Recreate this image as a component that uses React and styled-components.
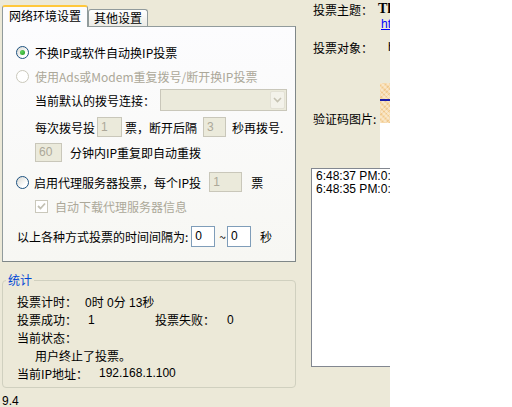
import React from "react";
import styled, { createGlobalStyle } from "styled-components";

const GlobalStyle = createGlobalStyle`
  html, body { margin: 0; padding: 0; background: #fff; }
  body {
    font-family: "Noto Sans CJK SC", "Liberation Sans", sans-serif;
    font-size: 12px;
    color: #000;
  }
`;

const Window = styled.div`
  display: flex;
  width: 390px;
  height: 407px;
  background: #ece9d8;
  overflow: hidden;
`;

const LeftCol = styled.div`
  width: 298px;
  flex-shrink: 0;
  box-sizing: border-box;
  padding: 5px 0 0 2px;
  overflow: hidden;
`;

const TabRow = styled.div`
  display: flex;
  align-items: flex-end;
  height: 21px;
`;

const Tab = styled.div`
  position: relative;
  z-index: 1;
  box-sizing: border-box;
  height: ${(p) => (p.$active ? 22 : 17)}px;
  padding: 0 ${(p) => (p.$active ? 6 : 5)}px;
  margin-bottom: ${(p) => (p.$active ? -1 : 0)}px;
  border: 1px solid #919b9c;
  border-bottom: none;
  border-top: ${(p) => (p.$active ? "2px solid #ffc83c" : "1px solid #919b9c")};
  border-radius: 3px 3px 0 0;
  background: ${(p) => (p.$active ? "#fcfcfe" : "linear-gradient(#fff, #ecebe6)")};
  line-height: ${(p) => (p.$active ? 18 : 15)}px;
  white-space: nowrap;
`;

const Panel = styled.div`
  box-sizing: border-box;
  width: 294px;
  height: 236px;
  padding-top: 13px;
  border: 1px solid #919b9c;
  border-right-color: #7f8788;
  border-bottom-color: #7f8788;
  background: linear-gradient(#fcfcfe, #f7f7f3);
`;

const Row = styled.div`
  display: flex;
  align-items: center;
  height: ${(p) => p.$h}px;
  margin-top: ${(p) => p.$mt || 0}px;
  padding-left: ${(p) => p.$indent || 0}px;
  color: ${(p) => (p.$disabled ? "#aca899" : "#000")};
  white-space: nowrap;
`;

const Label = styled.span`
  margin-left: ${(p) => p.$ml || 0}px;
  margin-right: ${(p) => p.$mr || 0}px;
`;

const Radio = styled.span`
  box-sizing: border-box;
  width: 13px;
  height: 13px;
  border-radius: 50%;
  border: 1px solid ${(p) => (p.$disabled ? "#cac8bb" : "#1c5180")};
  background: ${(p) => (p.$disabled ? "#fff" : "linear-gradient(135deg, #d8d8d2, #fff 70%)")};
  display: flex;
  align-items: center;
  justify-content: center;
  margin-right: ${(p) => p.$mr || 6}px;
  &::after {
    content: "";
    display: ${(p) => (p.$checked ? "block" : "none")};
    width: 5px;
    height: 5px;
    border-radius: 50%;
    background: radial-gradient(circle at 35% 35%, #5fd35f, #1f9a1f);
  }
`;

const Check = styled.span`
  box-sizing: border-box;
  width: 13px;
  height: 13px;
  border: 1px solid #cac8bb;
  background: #fff;
  display: flex;
  align-items: center;
  justify-content: center;
  margin-right: 7px;
`;

const Field = styled.span`
  box-sizing: border-box;
  display: inline-flex;
  align-items: center;
  width: ${(p) => p.$w}px;
  height: ${(p) => p.$h || 20}px;
  margin-left: ${(p) => p.$ml || 0}px;
  margin-right: ${(p) => p.$mr || 0}px;
  padding-left: 3px;
  border: 1px solid ${(p) => (p.$disabled ? "#c9c7ba" : "#7f9db9")};
  background: ${(p) => (p.$disabled ? "#ebeadb" : "#fff")};
  color: ${(p) => (p.$disabled ? "#aca899" : "#000")};
  font-family: "Liberation Sans", sans-serif;
  font-size: 12px;
`;

const Select = styled.span`
  box-sizing: border-box;
  display: flex;
  justify-content: flex-end;
  align-items: center;
  width: 127px;
  height: 22px;
  margin-left: 5px;
  padding-right: 1px;
  border: 1px solid #c9c7ba;
  background: #ebeadb;
`;

const SelectButton = styled.span`
  box-sizing: border-box;
  width: 15px;
  height: 18px;
  display: flex;
  align-items: center;
  justify-content: center;
  border: 1px solid #e3e1d5;
  border-radius: 2px;
  background: #f3f2ea;
`;

const Group = styled.fieldset`
  box-sizing: border-box;
  width: 294px;
  margin: 11px 0 0 0;
  padding: 0;
  border: 1px solid #d0d0bf;
  border-radius: 4px;
`;

const Legend = styled.legend`
  margin-left: 3px;
  padding: 0 2px;
  line-height: 14px;
  color: #0046d5;
`;

const StatsBody = styled.div`
  padding: 6px 0 5px 14px;
`;

const StatRow = styled.div`
  display: flex;
  align-items: center;
  height: 17.8px;
  padding-left: ${(p) => p.$indent || 0}px;
  white-space: nowrap;
`;

const StatCell = styled.span`
  width: ${(p) => (p.$w ? `${p.$w}px` : "auto")};
  flex-shrink: 0;
  font-family: ${(p) => (p.$num ? '"Liberation Sans", "Noto Sans CJK SC", sans-serif' : "inherit")};
`;

const Version = styled.div`
  margin-top: 7px;
  line-height: 12px;
  font-family: "Liberation Sans", sans-serif;
`;

const RightCol = styled.div`
  width: 92px;
  flex-shrink: 0;
  box-sizing: border-box;
  padding: 1px 0 0 15px;
  display: flex;
  flex-direction: column;
  overflow: hidden;
`;

const InfoRow = styled.div`
  display: flex;
  align-items: center;
  flex-shrink: 0;
  height: ${(p) => p.$h || 16}px;
  margin-top: ${(p) => p.$mt || 0}px;
  padding-left: ${(p) => p.$indent || 0}px;
  white-space: nowrap;
`;

const Title = styled.span`
  margin-left: 5px;
  font-family: "Liberation Serif", serif;
  font-weight: bold;
  font-size: 14px;
`;

const Link = styled.span`
  color: #0000ff;
  text-decoration: underline;
  font-family: "Liberation Sans", sans-serif;
`;

const Value = styled.span`
  margin-left: ${(p) => p.$ml || 0}px;
  font-family: "Liberation Sans", sans-serif;
`;

const CaptchaRow = styled.div`
  display: flex;
  flex-shrink: 0;
  height: 85px;
  margin-top: 28px;
`;

const CaptchaLabel = styled.span`
  width: 67px;
  flex-shrink: 0;
  padding-top: 28px;
  line-height: 16px;
  white-space: nowrap;
`;

const CaptchaCol = styled.div`
  display: flex;
  flex-direction: column;
  width: 40px;
  flex-shrink: 0;
`;

const CaptchaImage = styled.div`
  height: 40px;
  display: flex;
  align-items: flex-start;
  padding-top: 16px;
  box-sizing: border-box;
  background:
    repeating-linear-gradient(45deg, rgba(255, 255, 255, 0.35) 0 2px, transparent 2px 4px),
    repeating-linear-gradient(-45deg, rgba(230, 170, 90, 0.35) 0 1px, transparent 1px 3px),
    #f6d9aa;
`;

const CaptchaStroke = styled.span`
  width: 100%;
  height: 2px;
  background: #1c1ca8;
`;

const CaptchaBlank = styled.div`
  flex: 1;
  background: #fff;
`;

const LogBox = styled.div`
  box-sizing: border-box;
  flex-shrink: 0;
  height: 199px;
  margin-left: -2px;
  width: 120px;
  padding: 1px 0 0 4px;
  border: 1px solid #828790;
  background: #fff;
  font-family: "Liberation Sans", "Noto Sans CJK SC", sans-serif;
  white-space: nowrap;
`;

const LogLine = styled.div`
  line-height: 12.5px;
`;

function App() {
  return (
    <>
      <GlobalStyle />
      <Window>
        <LeftCol>
          <TabRow>
            <Tab $active>网络环境设置</Tab>
            <Tab>其他设置</Tab>
          </TabRow>
          <Panel>
            <Row $h={24} $indent={13}>
              <Radio $checked />
              <Label>不换IP或软件自动换IP投票</Label>
            </Row>
            <Row $h={24} $indent={13} $disabled>
              <Radio $disabled />
              <Label>使用Ads或Modem重复拨号/断开换IP投票</Label>
            </Row>
            <Row $h={24} $indent={32}>
              <Label>当前默认的拨号连接：</Label>
              <Select>
                <SelectButton>
                  <svg width="9" height="6" viewBox="0 0 9 6">
                    <path d="M1 1 L4.5 4.5 L8 1" fill="none" stroke="#c5c2b2" strokeWidth="1.6" />
                  </svg>
                </SelectButton>
              </Select>
            </Row>
            <Row $h={30} $indent={32}>
              <Label>每次拨号投</Label>
              <Field $disabled $w={25} $ml={2} $mr={3}>1</Field>
              <Label>票，断开后隔</Label>
              <Field $disabled $w={23} $ml={6} $mr={6}>3</Field>
              <Label>秒再拨号.</Label>
            </Row>
            <Row $h={20} $indent={32}>
              <Field $disabled $w={27} $h={19} $mr={8}>60</Field>
              <Label>分钟内IP重复即自动重拨</Label>
            </Row>
            <Row $h={20} $mt={10} $indent={13}>
              <Radio $mr={5} />
              <Label>启用代理服务器投票，每个IP投</Label>
              <Field $disabled $w={33} $ml={8} $mr={9}>1</Field>
              <Label>票</Label>
            </Row>
            <Row $h={20} $mt={4} $indent={32} $disabled>
              <Check>
                <svg width="9" height="8" viewBox="0 0 9 8">
                  <path d="M1 4 L3.5 6.5 L8 1.5" fill="none" stroke="#c2c0b3" strokeWidth="1.8" />
                </svg>
              </Check>
              <Label>自动下载代理服务器信息</Label>
            </Row>
            <Row $h={22} $mt={9} $indent={14}>
              <Label>以上各种方式投票的时间间隔为:</Label>
              <Field $w={24} $h={21} $ml={3}>0</Field>
              <Label $ml={4} $mr={1}>~</Label>
              <Field $w={24} $h={21} $mr={9}>0</Field>
              <Label>秒</Label>
            </Row>
          </Panel>

          <Group>
            <Legend>统计</Legend>
            <StatsBody>
              <StatRow>
                <StatCell $w={68}>投票计时：</StatCell>
                <StatCell $num>0时 0分 13秒</StatCell>
              </StatRow>
              <StatRow>
                <StatCell $w={71}>投票成功：</StatCell>
                <StatCell $w={67} $num>1</StatCell>
                <StatCell $w={72}>投票失败：</StatCell>
                <StatCell $num>0</StatCell>
              </StatRow>
              <StatRow>
                <StatCell>当前状态：</StatCell>
              </StatRow>
              <StatRow $indent={18}>
                <StatCell>用户终止了投票。</StatCell>
              </StatRow>
              <StatRow>
                <StatCell $w={82}>当前IP地址：</StatCell>
                <StatCell $num>192.168.1.100</StatCell>
              </StatRow>
            </StatsBody>
          </Group>
          <Version>9.4</Version>
        </LeftCol>

        <RightCol>
          <InfoRow>
            <span>投票主题：</span>
            <Title>Th</Title>
          </InfoRow>
          <InfoRow $h={14} $indent={68}>
            <Link>ht</Link>
          </InfoRow>
          <InfoRow $mt={8}>
            <span>投票对象：</span>
            <Value $ml={15}>h</Value>
          </InfoRow>
          <CaptchaRow>
            <CaptchaLabel>验证码图片:</CaptchaLabel>
            <CaptchaCol>
              <CaptchaImage>
                <CaptchaStroke />
              </CaptchaImage>
              <CaptchaBlank />
            </CaptchaCol>
          </CaptchaRow>
          <LogBox>
            <LogLine>6:48:37 PM:0:用</LogLine>
            <LogLine>6:48:35 PM:0:IP</LogLine>
          </LogBox>
        </RightCol>
      </Window>
    </>
  );
}

export default App;
